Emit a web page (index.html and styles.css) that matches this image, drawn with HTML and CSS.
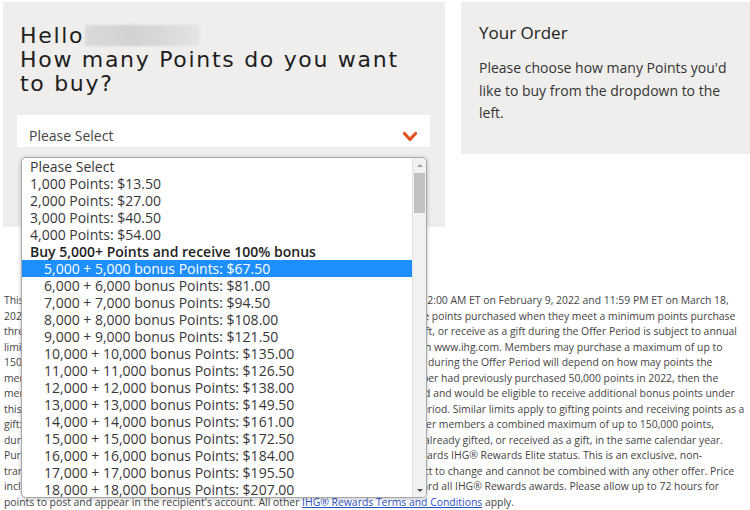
FILE: index.html
```html
<!DOCTYPE html>
<html lang="en">
<head>
<meta charset="utf-8">
<title>Buy Points</title>
<link rel="stylesheet" href="styles.css">
</head>
<body>
<div class="top">
  <section class="buy">
    <h1 class="title">Hello <span class="name"></span><br>How many Points do you want<br>to buy?</h1>
    <div class="select">
      <span class="select-value">Please Select</span>
      <svg class="chev" width="16" height="12" viewBox="0 0 16 12" aria-hidden="true"><path d="M2.5 4.5 L8 10.5 L13.5 4.5" fill="none" stroke="#e0531f" stroke-width="3.2" stroke-linecap="round" stroke-linejoin="round"/></svg>
      <div class="listbox">
        <ul class="options">
          <li>Please Select</li>
          <li>1,000 Points: $13.50</li>
          <li>2,000 Points: $27.00</li>
          <li>3,000 Points: $40.50</li>
          <li>4,000 Points: $54.00</li>
          <li class="group">Buy 5,000+ Points and receive 100% bonus</li>
          <li class="sub selected">5,000 + 5,000 bonus Points: $67.50</li>
          <li class="sub">6,000 + 6,000 bonus Points: $81.00</li>
          <li class="sub">7,000 + 7,000 bonus Points: $94.50</li>
          <li class="sub">8,000 + 8,000 bonus Points: $108.00</li>
          <li class="sub">9,000 + 9,000 bonus Points: $121.50</li>
          <li class="sub">10,000 + 10,000 bonus Points: $135.00</li>
          <li class="sub">11,000 + 11,000 bonus Points: $126.50</li>
          <li class="sub">12,000 + 12,000 bonus Points: $138.00</li>
          <li class="sub">13,000 + 13,000 bonus Points: $149.50</li>
          <li class="sub">14,000 + 14,000 bonus Points: $161.00</li>
          <li class="sub">15,000 + 15,000 bonus Points: $172.50</li>
          <li class="sub">16,000 + 16,000 bonus Points: $184.00</li>
          <li class="sub">17,000 + 17,000 bonus Points: $195.50</li>
          <li class="sub">18,000 + 18,000 bonus Points: $207.00</li>
        </ul>
        <div class="scrollbar">
          <span class="arrow up"></span>
          <span class="track"><span class="thumb"></span></span>
          <span class="arrow down"></span>
        </div>
      </div>
    </div>
  </section>
  <aside class="order">
    <h2 class="order-title">Your Order</h2>
    <p class="order-text">Please choose how many Points you'd like to buy from the dropdown to the left.</p>
  </aside>
</div>
<p class="legal">This offer is valid for all purchases of IHG® Rewards points made on ihg.com between 12:00 AM ET on February 9, 2022 and 11:59 PM ET on March 18,<br>
2022 (the "Offer Period"). IHG® Rewards members shall receive a 100% bonus on all the points purchased when they meet a minimum points purchase<br>
threshold of 5,000 points (per transaction). The number of points a member can buy, gift, or receive as a gift during the Offer Period is subject to annual<br>
limits as stated in the IHG® Rewards Terms and Conditions which can also be located on www.ihg.com. Members may purchase a maximum of up to<br>
150,000 points per calendar year. The number of bonus points a member could receive during the Offer Period will depend on how may points the<br>
member has already purchased in calendar year 2022. For example, if a Rewards member had previously purchased 50,000 points in 2022, then the<br>
member could then purchase up to an additional 100,000 points during the Offer Period and would be eligible to receive additional bonus points under<br>
this 100% bonus offer on up to 100,000 additional points purchased during the Offer Period. Similar limits apply to gifting points and receiving points as a<br>
gift: members can gift up to 150,000 points per calendar year and may receive from other members a combined maximum of up to 150,000 points,<br>
during the calendar year, inclusive of any and all points that a member has purchased, already gifted, or received as a gift, in the same calendar year.<br>
Purchased points, including all bonus points received under this offer, do not count towards IHG® Rewards Elite status. This is an exclusive, non-<br>
transferable offer valid only for IHG® Rewards members in good standing, and is subject to change and cannot be combined with any other offer. Price<br>
includes all applicable taxes and fees. All purchased and bonus points can be used toward all IHG® Rewards awards. Please allow up to 72 hours for<br>
points to post and appear in the recipient's account. All other <a class="terms" href="#">IHG® Rewards Terms and Conditions</a> apply.</p>
</body>
</html>
```

FILE: styles.css
```css
* { box-sizing: border-box; }

html, body {
  margin: 0;
  padding: 0;
  background: #ffffff;
}

body {
  font-family: "Open Sans", "Liberation Sans", sans-serif;
  color: #333333;
  width: 750px;
  height: 510px;
  overflow: hidden;
}

.top {
  display: flex;
  align-items: flex-start;
  gap: 16px;
  padding: 2px 0 0 3px;
}

.buy {
  width: 442px;
  background: #efeeed;
  padding: 22px 15px 80px 14px;
}

.title {
  margin: 0 0 19px 3px;
  font-family: "DejaVu Sans", sans-serif;
  font-weight: normal;
  font-size: 22px;
  line-height: 24px;
  letter-spacing: 1.7px;
  color: #1e1e1e;
}

.name {
  display: inline-block;
  width: 115px;
  height: 21px;
  vertical-align: -3px;
  margin-left: -8px;
  background: linear-gradient(90deg, #dadada, #d2d2d2 40%, #dcdcdc 80%, #e6e6e6);
  filter: blur(1.2px);
}

.select {
  position: relative;
  height: 32px;
  background: #ffffff;
  display: flex;
  align-items: center;
  justify-content: space-between;
  padding: 8px 12px 0 12px;
}

.select-value {
  font-size: 14px;
  color: #444444;
}

.chev {
  display: block;
}

.listbox {
  position: absolute;
  top: 42px;
  left: 4px;
  width: 406px;
  height: 341px;
  background: #ffffff;
  border: 1px solid #a9a9a9;
  border-radius: 5px;
  box-shadow: 0 1px 4px rgba(0, 0, 0, 0.25);
  display: flex;
  overflow: hidden;
  z-index: 2;
}

.options {
  list-style: none;
  margin: 0;
  padding: 0;
  flex: 1;
  font-size: 14px;
  line-height: 17px;
  color: #383838;
}

.options li {
  padding-left: 8px;
  white-space: nowrap;
}

.options .group {
  font-weight: 600;
  color: #222222;
}

.options .sub {
  padding-left: 22px;
}

.options .selected {
  background: #1e8fff;
  color: #ffffff;
}

.scrollbar {
  width: 14px;
  background: #f1f1f1;
  border-left: 1px solid #e2e2e2;
  display: flex;
  flex-direction: column;
}

.arrow {
  height: 14px;
  display: flex;
  align-items: center;
  justify-content: center;
}

.arrow.up::before {
  content: "";
  border-left: 3px solid transparent;
  border-right: 3px solid transparent;
  border-bottom: 3px solid #a3a3a3;
}

.arrow.down::before {
  content: "";
  border-left: 3px solid transparent;
  border-right: 3px solid transparent;
  border-top: 3px solid #505050;
}

.track {
  flex: 1;
  padding: 1px 1px 0 1px;
}

.thumb {
  display: block;
  height: 40px;
  background: #c1c1c1;
}

.order {
  flex: 1;
  height: 152px;
  background: #efeeed;
  padding: 19px 18px 0 18px;
}

.order-title {
  margin: 0 0 12px 0;
  font-weight: normal;
  font-size: 17px;
  line-height: 24px;
  color: #222222;
}

.order-text {
  margin: 0;
  font-size: 14px;
  line-height: 22.5px;
  color: #333333;
}

.legal {
  margin: 66px 0 0 0;
  padding: 0 0 0 4px;
  font-size: 10.4px;
  line-height: 15.5px;
  color: #444444;
  white-space: nowrap;
}

.terms {
  color: #2c50c8;
  text-decoration: underline;
}
```
